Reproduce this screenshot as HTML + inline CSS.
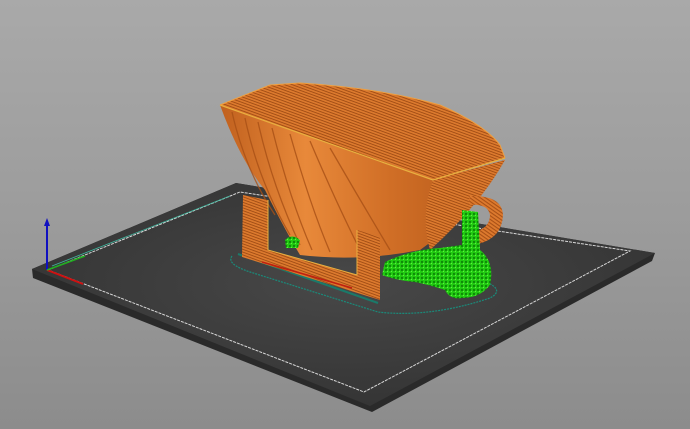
<!DOCTYPE html>
<html><head><meta charset="utf-8"><style>
html,body{margin:0;padding:0;width:690px;height:429px;overflow:hidden}
body{background:linear-gradient(180deg,#a9a9a9 0%,#9c9c9c 50%,#8c8c8c 100%)}
svg{display:block}
</style></head><body>
<svg width="690" height="429" viewBox="0 0 690 429" xmlns="http://www.w3.org/2000/svg">
<defs>
<radialGradient id="bed" cx="0.5" cy="0.45" r="0.6">
<stop offset="0" stop-color="#484848"/><stop offset="1" stop-color="#333333"/></radialGradient>
<pattern id="st1" width="3" height="3" patternUnits="userSpaceOnUse" patternTransform="rotate(35)">
<rect width="3" height="3" fill="#dd7a2e"/><rect width="3" height="1.1" fill="#a85016"/></pattern>
<pattern id="st2" width="2.6" height="2.6" patternUnits="userSpaceOnUse" patternTransform="rotate(20)">
<rect width="3" height="3" fill="#dc7a2e"/><rect width="3" height="0.9" fill="#a04c14"/></pattern>
<linearGradient id="body" x1="0" y1="0" x2="1" y2="0">
<stop offset="0" stop-color="#c0601e"/><stop offset="0.3" stop-color="#e8893a"/><stop offset="0.6" stop-color="#d06e26"/><stop offset="1" stop-color="#b05618"/></linearGradient>
<pattern id="gr" width="4" height="4" patternUnits="userSpaceOnUse">
<rect width="4" height="4" fill="#22cc12"/><circle cx="2" cy="2" r="1.2" fill="#0e8a08"/><circle cx="3.5" cy="3.5" r="0.7" fill="#5cf040"/></pattern>
</defs>
<polygon points="32,269 236,183 655,253 652,261 372,412 33,278" fill="#2a2a2a"/>
<polygon points="32,269 236,183 655,253 370,406" fill="url(#bed)"/>
<polygon points="48,270 240,192 630,251 364,392" fill="none" stroke="#d8d8d8" stroke-width="1" stroke-dasharray="3,1"/>
<line x1="52" y1="266" x2="230" y2="196" stroke="#3fb8a0" stroke-width="0.8"/>
<line x1="47" y1="270" x2="47" y2="222" stroke="#1010c0" stroke-width="2"/>
<polygon points="44,226 47,218 50,226" fill="#1010c0"/>
<line x1="47" y1="270" x2="83" y2="284" stroke="#d01010" stroke-width="2"/>
<line x1="47" y1="270" x2="85" y2="256" stroke="#20b020" stroke-width="1.5"/>
<path d="M232,256 Q226,264 250,272 L378,312 Q430,318 490,298 Q505,290 486,282" fill="none" stroke="#1a8a7a" stroke-width="1.2" stroke-dasharray="2,1"/>
<path d="M238,254 L378,303" fill="none" stroke="#1a7a6a" stroke-width="2"/>
<path d="M220,105 Q240,160 265,190 Q285,230 300,255 Q360,262 420,250 Q470,215 505,160 L433,180 Z" fill="url(#body)"/>
<g fill="none" stroke="#a85016" stroke-width="1.3" opacity="0.8">
<path d="M232,112 Q245,170 275,215"/><path d="M245,118 Q258,180 290,235"/><path d="M258,122 Q272,185 300,245"/>
<path d="M272,128 Q290,200 312,250"/><path d="M290,134 Q310,205 330,252"/><path d="M310,141 Q335,200 360,250"/>
<path d="M330,148 Q360,200 390,250"/>
</g>
<path d="M433,180 L505,160 Q480,205 430,250 Q420,215 433,180Z" fill="url(#st2)"/>
<path d="M220,105 L270,85 L300,83 Q380,88 440,105 Q485,125 500,145 L505,158 L433,180 Z" fill="url(#st2)"/>
<path d="M220,105 L433,180 L505,158" fill="none" stroke="#e8b040" stroke-width="1.2"/>
<path d="M220,105 L270,85 L300,83 Q380,88 440,105 Q485,125 500,145 L505,158" fill="none" stroke="#f0a040" stroke-width="1"/>
<path d="M470,196 Q502,195 503,215 Q502,238 478,244 L474,232 Q490,228 490,215 Q488,203 468,205Z" fill="url(#st1)"/>
<path d="M462,210 L478,212 L480,250 Q495,262 490,285 Q480,298 462,298 Q450,300 445,290 Q430,285 415,282 Q395,280 382,275 L385,262 Q410,250 440,248 L462,245Z" fill="url(#gr)"/>
<path d="M285,240 Q292,233 300,240 L298,248 L286,248Z" fill="url(#gr)"/>
<path d="M243,195 L268,200 L268,250 L357,275 L357,230 L380,237 L380,300 L242,257Z" fill="url(#st2)"/>
<path d="M268,200 L268,250 L357,275 L357,230" fill="none" stroke="#e8b040" stroke-width="1"/>
<line x1="262" y1="262" x2="352" y2="288" stroke="#c02010" stroke-width="1.5"/>
</svg>
</body></html>
